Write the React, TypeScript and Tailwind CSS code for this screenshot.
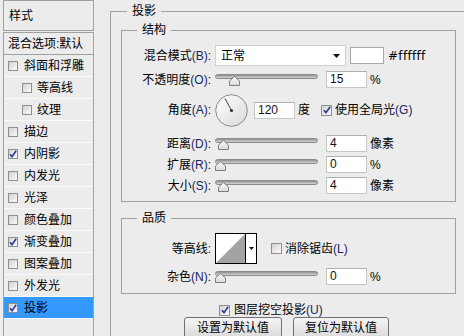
import React from "react";

const Key = ({ k }: { k: string }) => <span className="text-[#16245c]">({k})</span>;

const Check = ({ checked, small }: { checked?: boolean; small?: boolean }) => (
    <span className={`inline-flex shrink-0 items-center justify-center border border-[#8f8f8f] bg-linear-to-br from-[#d2d2d2] to-[#fbfbfb] ${small ? "w-[10px] h-[10px]" : "w-[11px] h-[11px]"}`}>
        {checked && (
            <svg width="8" height="8" viewBox="0 0 8 8">
                <path d="M1 4.2 L3 6.6 L7.2 0.8" stroke="#2b3a9a" strokeWidth="1.6" fill="none" />
            </svg>
        )}
    </span>
);

const Slider = ({ pos }: { pos: number }) => (
    <div className="relative w-[103px] h-[17px] shrink-0">
        <div className="absolute left-0 right-0 top-[3px] h-[5px] rounded-full border border-[#8a8a8a] bg-linear-to-b from-[#8f8f8f] to-[#d6d6d6]" />
        <svg className="absolute top-[5px]" style={{ left: pos }} width="11" height="10" viewBox="0 0 11 10">
            <defs>
                <linearGradient id="th" x1="0" y1="0" x2="0" y2="1">
                    <stop offset="0" stopColor="#fdfdfd" />
                    <stop offset="1" stopColor="#d8d8d8" />
                </linearGradient>
            </defs>
            <path d="M5.5 0.5 L10.5 5 V9.5 H0.5 V5 Z" fill="url(#th)" stroke="#7d7d7d" />
        </svg>
    </div>
);

const Input = ({ v }: { v: string }) => (
    <div className="w-[41px] h-[17px] shrink-0 bg-white border border-[#c6c6c6] border-t-[#b0b0b0] pl-[3px] leading-[15px] text-[#111]">
        {v}
    </div>
);

const Label = ({ children }: { children: React.ReactNode }) => (
    <div className="w-[89px] shrink-0 text-right whitespace-nowrap">{children}</div>
);

const SliderRow = ({ label, k, pos, v, unit, mt }: { label: string; k: string; pos: number; v: string; unit: string; mt: string }) => (
    <div className={`flex items-center h-[17px] ${mt}`}>
        <Label>{label}<Key k={k} />:</Label>
        <div className="ml-[4px]"><Slider pos={pos} /></div>
        <div className="ml-[8px]"><Input v={v} /></div>
        <span className="ml-[3px]">{unit}</span>
    </div>
);

const items = [
    { t: "混合选项:默认", head: true },
    { t: "斜面和浮雕" },
    { t: "等高线", sub: true },
    { t: "纹理", sub: true },
    { t: "描边" },
    { t: "内阴影", c: true },
    { t: "内发光" },
    { t: "光泽" },
    { t: "颜色叠加" },
    { t: "渐变叠加", c: true },
    { t: "图案叠加" },
    { t: "外发光" },
    { t: "投影", c: true, sel: true },
];

const App = () => {
    return (
        <div className="w-[464px] h-[336px] bg-[#ececec] flex items-start overflow-hidden text-[12px] leading-[16px] text-black font-['Liberation_Sans','Noto_Sans_CJK_SC',sans-serif]">
            {/* styles list */}
            <div className="ml-[3px] w-[91px] h-full shrink-0 flex flex-col">
                <div className="h-[31px] border border-[#a0a0a0] flex items-center pl-[5px]">样式</div>
                <div className="mt-[1px] flex-1 border-x border-t border-[#a0a0a0] flex flex-col">
                    {items.map((it) => (
                        <div
                            key={it.t}
                            className={`h-[22px] flex items-center whitespace-nowrap ${it.head ? "border-b border-[#a0a0a0] pl-[4px]" : "border-b border-[#fafafa]"} ${it.sel ? "bg-[#3399ff]" : ""} ${it.sub ? "pl-[18px]" : it.head ? "" : "pl-[4px]"}`}
                        >
                            {!it.head && <Check small checked={it.c} />}
                            <span className={it.head ? "" : it.sub ? "ml-[5px]" : "ml-[6px]"}>{it.t}</span>
                        </div>
                    ))}
                </div>
            </div>

            {/* 投影 */}
            <fieldset className="ml-[16px] mt-[3px] w-[370px] shrink-0 border border-[#a0a0a0] pb-[20px]">
                <legend className="ml-[16px] px-[5px] leading-[16px]">投影</legend>

                <fieldset className="ml-[10px] mt-[3px] w-[335px] border border-[#a0a0a0] pb-[7px]">
                    <legend className="ml-[15px] px-[5px] leading-[16px]">结构</legend>

                    <div className="flex items-center h-[21px] mt-[7px]">
                        <Label>混合模式<Key k="B" />:</Label>
                        <div className="ml-[4px] w-[131px] h-[21px] bg-white border border-[#d0d0d0] flex items-center justify-between pl-[5px] pr-[5px]">
                            <span>正常</span>
                            <svg width="7" height="4" viewBox="0 0 7 4"><path d="M0 0 H7 L3.5 4 Z" fill="#111" /></svg>
                        </div>
                        <div className="ml-[4px] w-[34px] h-[17px] bg-white border border-[#a9a9a9]" />
                        <span className="ml-[4px] font-['DejaVu_Sans',sans-serif] text-[12px] tracking-[0.3px]">#ffffff</span>
                    </div>

                    <SliderRow label="不透明度" k="O" pos={14} v="15" unit="%" mt="mt-[5px]" />

                    <div className="flex items-center h-[32px] mt-[6px]">
                        <Label>角度<Key k="A" />:</Label>
                        <svg className="ml-[4px] shrink-0" width="33" height="33" viewBox="0 0 33 33">
                            <defs>
                                <linearGradient id="dial" x1="0" y1="0" x2="1" y2="1">
                                    <stop offset="0" stopColor="#ffffff" />
                                    <stop offset="1" stopColor="#d9d9d9" />
                                </linearGradient>
                            </defs>
                            <circle cx="16.5" cy="16.5" r="15.8" fill="url(#dial)" stroke="#8a8a8a" />
                            <line x1="16.5" y1="16.5" x2="10" y2="4.5" stroke="#444" strokeWidth="1" />
                            <circle cx="16.5" cy="16.5" r="1.6" fill="#333" />
                        </svg>
                        <div className="ml-[6px]"><Input v="120" /></div>
                        <span className="ml-[3px]">度</span>
                        <span className="ml-[11px] flex"><Check checked /></span>
                        <span className="ml-[3px]">使用全局光<Key k="G" /></span>
                    </div>

                    <SliderRow label="距离" k="D" pos={3} v="4" unit="像素" mt="mt-[9px]" />
                    <SliderRow label="扩展" k="R" pos={0} v="0" unit="%" mt="mt-[4px]" />
                    <SliderRow label="大小" k="S" pos={3} v="4" unit="像素" mt="mt-[4px]" />
                </fieldset>

                <fieldset className="ml-[10px] mt-[8px] w-[335px] border border-[#a0a0a0] pb-[8px]">
                    <legend className="ml-[15px] px-[5px] leading-[16px]">品质</legend>

                    <div className="flex items-center h-[31px] mt-[7px]">
                        <Label>等高线:</Label>
                        <div className="ml-[4px] w-[42px] h-[31px] flex border border-black bg-white">
                            <svg width="29" height="29" viewBox="0 0 29 29" className="shrink-0">
                                <rect x="0" y="0" width="29" height="29" fill="#fff" />
                                <path d="M0 29 L29 0 V29 Z" fill="#a3a3a3" />
                            </svg>
                            <div className="flex-1 border-l border-black flex items-center justify-center">
                                <svg width="5" height="3" viewBox="0 0 5 3"><path d="M0 0 H5 L2.5 3 Z" fill="#111" /></svg>
                            </div>
                        </div>
                        <span className="ml-[14px] flex"><Check /></span>
                        <span className="ml-[3px]">消除锯齿<Key k="L" /></span>
                    </div>

                    <SliderRow label="杂色" k="N" pos={0} v="0" unit="%" mt="mt-[4px]" />
                </fieldset>

                <div className="flex items-center h-[12px] mt-[10px] ml-[108px]">
                    <Check checked />
                    <span className="ml-[4px] whitespace-nowrap">图层挖空投影<Key k="U" /></span>
                </div>

                <div className="flex mt-[1px] ml-[73px]">
                    <button className="w-[98px] h-[22px] rounded-[3px] border border-[#707070] bg-linear-to-b from-[#f4f4f4] to-[#dadada] text-[12px] leading-[20px]">设置为默认值</button>
                    <button className="ml-[11px] w-[96px] h-[22px] rounded-[3px] border border-[#707070] bg-linear-to-b from-[#f4f4f4] to-[#dadada] text-[12px] leading-[20px]">复位为默认值</button>
                </div>
            </fieldset>
        </div>
    );
};

export default App;
